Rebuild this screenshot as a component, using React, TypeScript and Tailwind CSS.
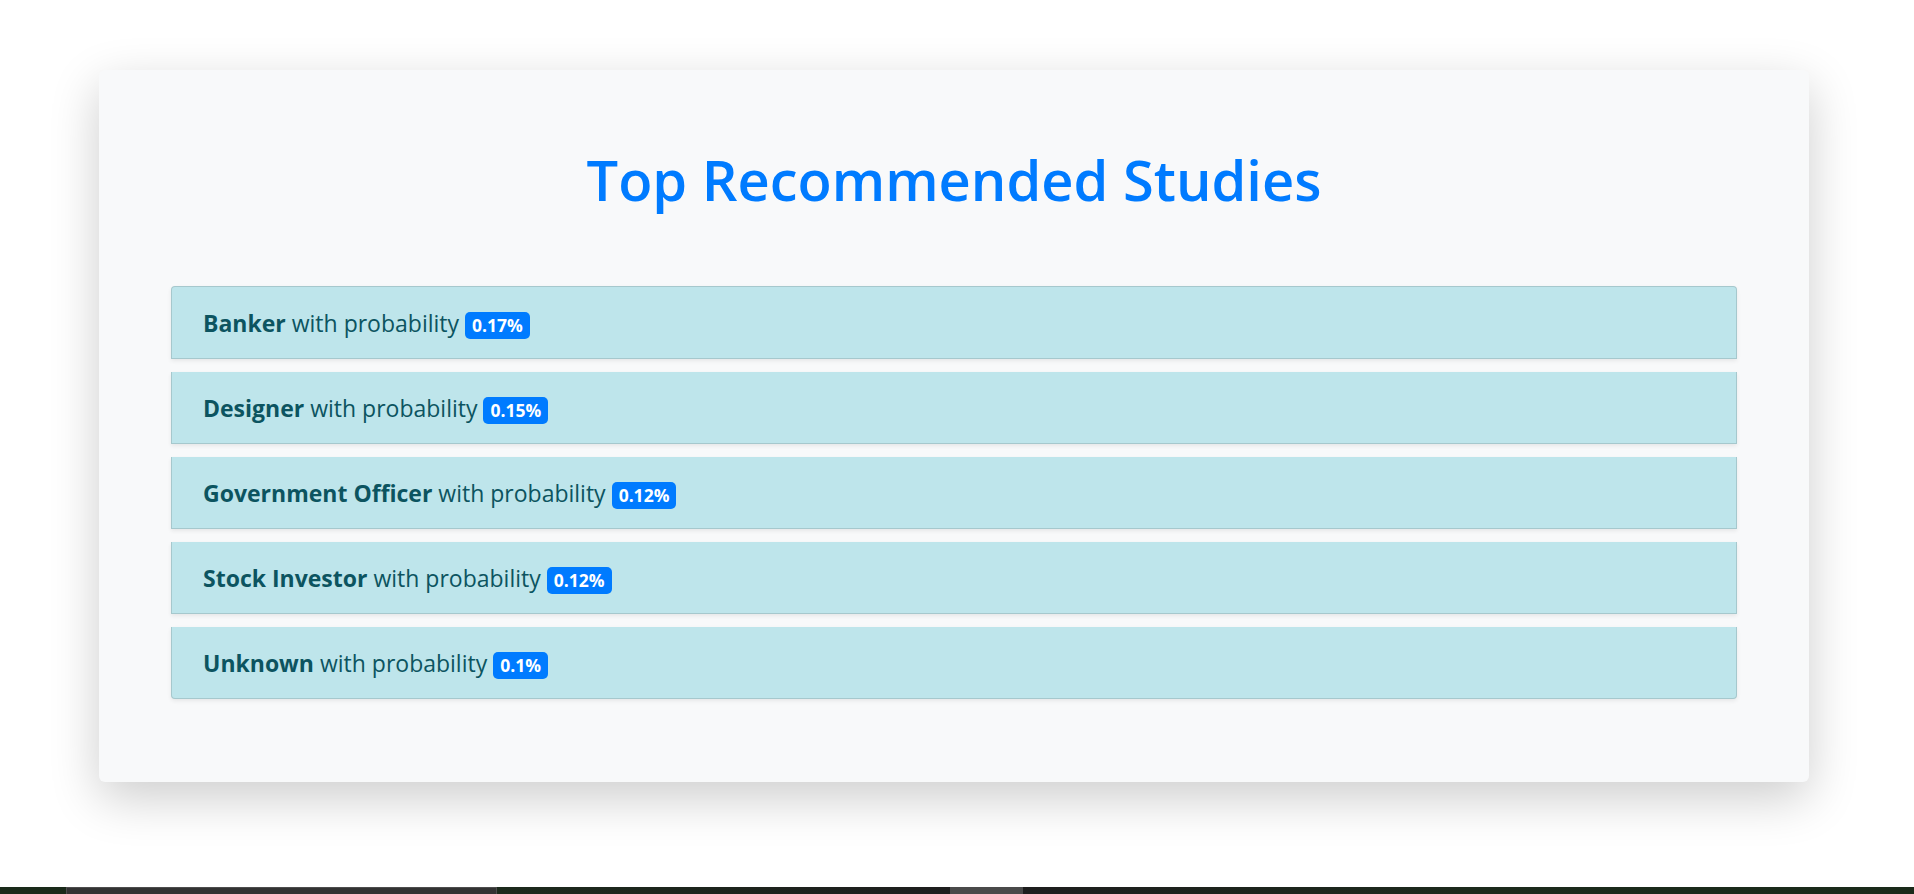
const studies = [
  { name: "Banker", probability: "0.17%" },
  { name: "Designer", probability: "0.15%" },
  { name: "Government Officer", probability: "0.12%" },
  { name: "Stock Investor", probability: "0.12%" },
  { name: "Unknown", probability: "0.1%" },
];

const Taskbar: React.FC = () => (
  <div className="flex h-[7px] shrink-0 bg-[#1b281b]">
    <div className="w-[66px] bg-[#1a2a1a]" />
    <div className="w-[431px] border-x border-t border-[#4d4d4d] bg-[#333333]" />
    <div className="w-[453px] bg-gradient-to-r from-[#1c2a1c] to-[#1e1e1e]" />
    <div className="w-[73px] bg-[#4a4a4a]" />
    <div className="flex-1 bg-gradient-to-r from-[#1e1e1e] via-[#1c2a1c] to-[#1a2a1a]" />
  </div>
);

export default function App() {
  return (
    <div className="flex h-screen flex-col overflow-hidden bg-white font-['Open_Sans',sans-serif]">
      <div className="flex-1">
        <div className="ml-[99px] mt-[70px] h-[712px] w-[1710px] rounded-md bg-[#f8f9fa] px-[72px] pt-[76px] shadow-[0_16px_50px_rgba(0,0,0,0.2)]">
          <h1 className="text-center text-[56px] font-semibold leading-[1.2] text-[#007bff]">
            Top Recommended Studies
          </h1>

          <ul className="mt-[73px] flex flex-col gap-[13px]">
            {studies.map((study, i) => (
              <li
                key={study.name}
                className={`border border-[rgba(0,0,0,0.125)] bg-[#bee5eb] px-[31px] py-[17.5px] text-[23px] leading-[36px] text-[#0c5460] shadow-[0_2px_4px_rgba(0,0,0,0.075)] ${
                  i === 0 ? "rounded-t" : "border-t-0"
                } ${i === studies.length - 1 ? "rounded-b" : ""}`}
              >
                <strong className="font-bold">{study.name}</strong> with probability{" "}
                <span className="inline-block rounded-[5px] bg-[#007bff] px-[7px] py-[5px] align-baseline text-[17.5px] font-bold leading-none text-white">
                  {study.probability}
                </span>
              </li>
            ))}
          </ul>
        </div>
      </div>
      <Taskbar />
    </div>
  );
}
